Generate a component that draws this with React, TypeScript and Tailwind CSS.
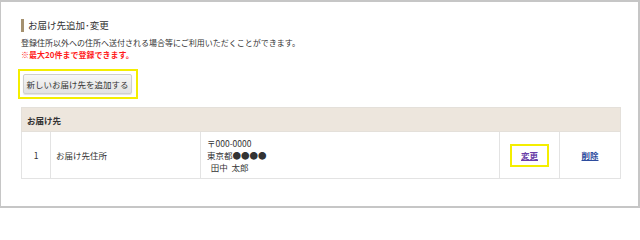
export default function App() {
  return (
    <div
      className="box-border h-[208px] w-[640px] border-t-2 border-r-2 border-b-2 border-l border-[#c6c6c6] bg-white pt-[17px] pl-5 pr-[19px] text-[#333]"
      style={{ fontFamily: '"Noto Sans CJK JP", "Noto Sans", sans-serif' }}
    >
      {/* Heading */}
      <div className="flex h-[13px] items-center border-l-[3px] border-[#a5916f] pl-[4px] text-[9.5px] leading-[13px]">
        お届け先追加･変更
      </div>
      <p className="mt-[5px] text-[8px] leading-[12px]">
        登録住所以外への住所へ送付される場合等にご利用いただくことができます。
      </p>
      <p className="text-[8px] font-bold leading-[12px] text-[#ff1a1a]">※最大20件まで登録できます。</p>

      {/* Add button */}
      <div className="mt-[8px] -ml-[3px] flex w-fit border-2 border-[#f4ee00] py-[3px] pl-[3px] pr-[4px]">
        <button className="h-[20px] w-[109px] rounded-[2px] border border-[#cfcfcf] bg-gradient-to-b from-[#f6f6f6] to-[#e2e2e2] text-[8.5px] leading-[18px] text-[#333] shadow-[0_1px_1px_rgba(0,0,0,0.12)]">
          新しいお届け先を追加する
        </button>
      </div>

      {/* Address table */}
      <table className="mt-[8px] w-[599px] table-fixed border-collapse text-[8.5px] leading-[12px]">
        <colgroup>
          <col className="w-[29px]" />
          <col className="w-[150px]" />
          <col className="w-[299px]" />
          <col className="w-[60px]" />
          <col className="w-[61px]" />
        </colgroup>
        <thead>
          <tr className="h-[24px] bg-[#ede6dd]">
            <th colSpan={5} className="border border-[#e4e0da] px-[5px] text-left font-bold">
              お届け先
            </th>
          </tr>
        </thead>
        <tbody>
          <tr className="h-[47px]">
            <td className="border border-[#e3e3e3] text-center">1</td>
            <td className="border border-[#e3e3e3] px-[5px]">お届け先住所</td>
            <td className="border border-[#e3e3e3] px-[6px]">
              <div>〒000-0000</div>
              <div>東京都●●●●</div>
              <div>&nbsp;&nbsp;田中&nbsp;&nbsp;太郎</div>
            </td>
            <td className="border border-[#e3e3e3] text-center">
              <a
                href="#"
                className="inline-flex h-[23px] items-center border-2 border-[#f4ee00] px-[9px] font-bold text-[#6a3ea8] underline"
              >
                変更
              </a>
            </td>
            <td className="border border-[#e3e3e3] text-center">
              <a href="#" className="font-bold text-[#2d4c9e] underline">
                削除
              </a>
            </td>
          </tr>
        </tbody>
      </table>
    </div>
  );
}
